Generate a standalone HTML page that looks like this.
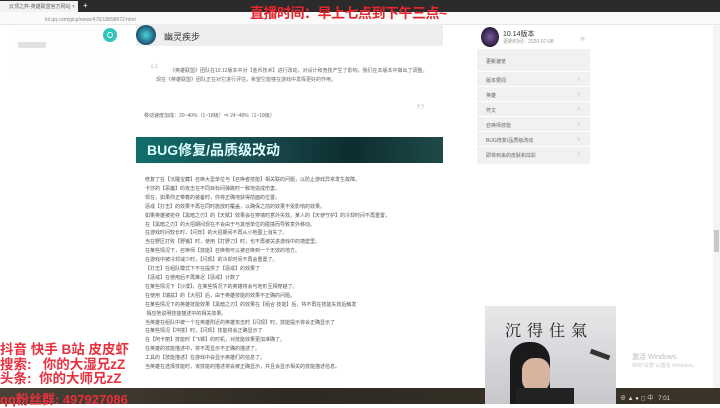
<!DOCTYPE html>
<html><head><meta charset="utf-8"><style>
*{margin:0;padding:0;box-sizing:border-box}
body{width:720px;height:404px;overflow:hidden;background:#fff;position:relative;font-family:"Liberation Sans","Noto Sans CJK SC",sans-serif;color:#555}
.a{position:absolute}
.t{font-size:5px;color:#666;white-space:nowrap}
</style></head><body>
<div class="a" style="left:0;top:0;width:720px;height:12px;background:#2b2b2b"></div>
<div class="a" style="left:0;top:1px;width:78px;height:11px;background:#f2f2f2"></div>
<div class="a t" style="left:9px;top:3px">云顶之弈-英雄联盟官方网站 ×</div>
<div class="a" style="left:83px;top:1px;color:#fff;font-size:8px">+</div>
<div class="a" style="left:0;top:12px;width:720px;height:13px;background:#fafafa;border-bottom:1px solid #e6e6e6"></div>
<div class="a" style="left:250px;top:3px;color:#e8252c;font-size:14px;font-weight:bold;letter-spacing:-0.5px;white-space:nowrap">直播时间：早上七点到下午三点~</div>
<div class="a t" style="left:45px;top:17px;color:#888">lol.qq.com/gicp/news/476/18898872.html</div>
<div class="a" style="left:10px;top:26px;width:110px;height:48px;background:#fdfdfd"></div>
<div class="a" style="left:18px;top:42px;width:28px;height:6px;background:#e2e2e2"></div>
<div class="a" style="left:103px;top:28px;width:14px;height:14px;border-radius:50%;background:#2fc6b8"></div>
<div class="a" style="left:107px;top:32px;width:6px;height:6px;border-radius:50%;border:1px solid #fff"></div>
<div class="a" style="left:136px;top:24px;width:307px;height:22px;background:#eee"></div>
<div class="a" style="left:136px;top:25px;width:20px;height:20px;border-radius:50%;background:radial-gradient(circle,#4ad3e0,#1a4f6a 70%)"></div>
<div class="a" style="left:164px;top:30px;font-size:9px;color:#333">幽灵疾步</div>
<div class="a" style="left:150px;top:60px;font-size:20px;color:#ddd;font-family:'Liberation Serif'">“</div>
<div class="a t" style="left:170px;top:67px">《英雄联盟》团队在10.12版本中对【金币技术】进行改动，对设计和竞技产生了影响，我们在本版本中做出了调整。</div>
<div class="a t" style="left:156px;top:76px">现在《英雄联盟》团队正在对它进行评估，希望它能够在游戏中发挥更好的作用。</div>
<div class="a" style="left:416px;top:100px;font-size:20px;color:#ddd;font-family:'Liberation Serif'">”</div>
<div class="a t" style="left:144px;top:112px">移动速度加成：20~40%（1~18级）⇒ 24~48%（1~18级）</div>
<div class="a" style="left:136px;top:137px;width:307px;height:26px;background:linear-gradient(90deg,#0f6f6c,#1a4a4c 40%,#0d2d30 70%,#1f4a4a)"></div>
<div class="a" style="left:147px;top:140px;font-size:14px;font-weight:bold;color:#dff;white-space:nowrap">BUG修复/品质级改动</div>
<div class="a" style="left:145px;top:176px;width:300px;font-size:5px;line-height:8.9px;color:#555">
修复了在【沉睡宝藏】召唤大型单位与【召唤者技能】相关联的问题，以防止游戏异常发生故障。<br>
卡莎的【恶魔】的攻击在不同目标间弹跳时一致地造成伤害。<br>
现在，如果你正带着的装备时，你将正确地获得前面的位置。<br>
惩戒【打击】的效果不再在同时施放时覆盖，以确保之前的效果不受影响的效果。<br>
如果英雄被抢夺【黑暗之刃】的【天赋】效果会在穿墙时意外失效。某人的【天使守护】的冷却时间不再重置，<br>
在【黑暗之刃】的大招期间现在不会由于与其他单位的碰撞而导致意外移动。<br>
在游戏时间较长时，【闪烁】的大招期间不再从小地图上消失了。<br>
当在野区打败【野猪】时，使用【打野刀】时，也不再被关进游戏中的墙壁里。<br>
在某些情况下，召唤师【技能】召唤物可以被召唤到一个无效的地方。<br>
在游戏中被冷却减少时，【闪现】的冷却时间不再会重置了。<br>
【打击】在组队模式下不在提供了【惩戒】的效果了<br>
【惩戒】在使用后不再推迟【惩戒】计数了<br>
在某些情况下【沙漠】，在某些情况下的英雄将会与地形互相穿越了。<br>
在使用【瑞兹】的【大招】后，由于英雄技能的效果不正确的问题。<br>
在某些情况下的英雄技能效果【黑暗之刃】的效果在【组合 技能】后，将不再在技能失效后触发<br>
&nbsp;相应地说明技能描述中的相关效果。<br>
当英雄在组队中被一个在英雄附近的英雄攻击时【闪现】时，技能提示将会正确显示了<br>
在某些情况【冲撞】时，【闪现】技能将会正确显示了<br>
在【阿卡丽】技能时【飞镖】的时机，对技能效果更加准确了。<br>
在英雄的技能描述中，将不再显示不正确的描述了。<br>
工具的【技能描述】在游戏中会显示英雄们的信息了。<br>
当英雄在选择技能时，该技能的描述将会被正确显示，并且会显示相关的技能描述信息。
</div>
<div class="a" style="left:477px;top:26px;width:113px;height:22px;background:#fff"></div>
<div class="a" style="left:481px;top:27px;width:18px;height:20px;border-radius:50%;background:radial-gradient(circle,#7a5aa0,#2a1c3c 70%)"></div>
<div class="a" style="left:503px;top:29px;font-size:7px;color:#333">10.14版本</div>
<div class="a t" style="left:503px;top:38px;color:#999">更新时间：2020-07-08</div>
<div class="a" style="left:580px;top:33px;font-size:9px;color:#bbb">»</div>
<div class="a" style="left:477px;top:49px;width:113px;height:115px;background:#f1f1f1"></div>
<div class="a t" style="left:486px;top:58px;color:#555">更新速览</div>
<div class="a" style="left:477px;top:71px;width:113px;height:92px">
<div style="height:15px;border-top:1px solid #fff;padding:5px 0 0 9px" class="t">版本要闻<span style="float:right;margin-right:10px;color:#bbb;font-size:8px;margin-top:-3px">›</span></div>
<div style="height:15px;border-top:1px solid #fff;padding:5px 0 0 9px" class="t">英雄<span style="float:right;margin-right:10px;color:#bbb;font-size:8px;margin-top:-3px">›</span></div>
<div style="height:15px;border-top:1px solid #fff;padding:5px 0 0 9px" class="t">符文<span style="float:right;margin-right:10px;color:#bbb;font-size:8px;margin-top:-3px">›</span></div>
<div style="height:15px;border-top:1px solid #fff;padding:5px 0 0 9px" class="t">召唤师技能<span style="float:right;margin-right:10px;color:#bbb;font-size:8px;margin-top:-3px">›</span></div>
<div style="height:15px;border-top:1px solid #fff;padding:5px 0 0 9px" class="t">BUG修复/品质级改动<span style="float:right;margin-right:10px;color:#bbb;font-size:8px;margin-top:-3px">›</span></div>
<div style="height:15px;border-top:1px solid #fff;padding:5px 0 0 9px" class="t">即将到来的皮肤和炫彩<span style="float:right;margin-right:10px;color:#bbb;font-size:8px;margin-top:-3px">›</span></div>
</div>
<div class="a" style="left:713px;top:26px;width:7px;height:362px;background:#f4f4f4"></div>
<div class="a" style="left:714px;top:230px;width:5px;height:22px;background:#c8c8c8"></div>
<div class="a t" style="left:632px;top:352px;color:#bbb;font-size:7px">激活 Windows</div>
<div class="a t" style="left:632px;top:362px;color:#ccc">转到"设置"以激活 Windows。</div>
<div class="a" style="left:0;top:388px;width:720px;height:16px;background:linear-gradient(90deg,#4a4236,#2e2a22 40%,#3a3428)"></div>
<div class="a" style="left:485px;top:306px;width:131px;height:98px;background:linear-gradient(180deg,#e8e8ea,#d8d8dc 50%,#c8c8cc)"></div>
<div class="a" style="left:505px;top:318px;font-size:16px;color:#222;font-family:'Noto Serif CJK SC',serif;letter-spacing:6px">沉得住氣</div>
<div class="a" style="left:510px;top:342px;width:40px;height:62px;border-radius:18px 18px 0 0;background:#1b1b1e"></div>
<div class="a" style="left:522px;top:358px;width:28px;height:34px;border-radius:12px;background:#d6b4a0"></div>
<div class="a" style="left:516px;top:388px;width:58px;height:16px;background:#222"></div>
<div class="a" style="left:590px;top:352px;width:20px;height:5px;background:#333;transform:rotate(20deg)"></div>
<div class="a t" style="left:620px;top:393px;color:#ddd;font-size:6px">⊕ ▲ ● ◻ 中 &nbsp;&nbsp;7:01</div>
<div class="a" style="left:0;top:343px;font-size:13.5px;font-weight:bold;color:#e8303e;line-height:14.5px;white-space:nowrap">抖音 快手 B站 皮皮虾<br>搜索:&nbsp;&nbsp;&nbsp;你的大湿兄zZ<br>头条:&nbsp;&nbsp;你的大师兄zZ</div>
<div class="a" style="left:0;top:389px;font-size:13px;font-weight:bold;color:#e8303e;white-space:nowrap">qq粉丝群: 497927086</div>
</body></html>
